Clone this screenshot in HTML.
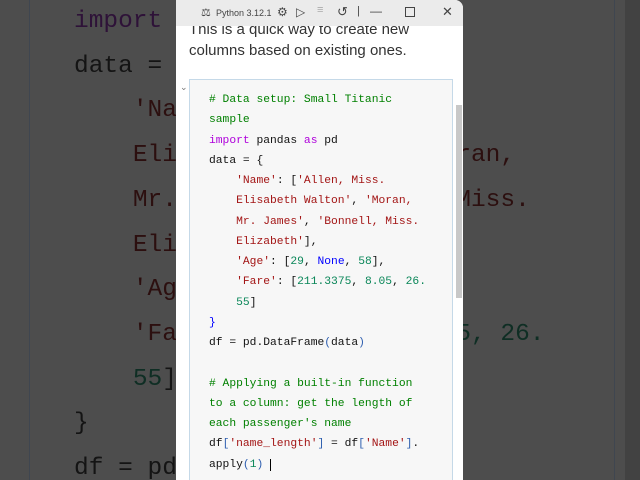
<!DOCTYPE html>
<html><head><meta charset="utf-8"><style>
html,body{margin:0;padding:0;width:640px;height:480px;overflow:hidden;background:#4d4d4d;position:relative}
.bg{position:absolute;left:74px;top:0;font:24.5px/44.7px "Liberation Mono",monospace;color:#141414;white-space:pre;margin:0}
.bg .r{color:#2c0f0f}.bg .k{color:#2e1238}.bg .n{color:#0f2e24}.bg .b{color:#141f44}
.vl{position:absolute;top:0;width:1px;height:480px;background:#3f4650}
.win{position:absolute;left:176px;top:0;width:287px;height:480px;background:#fff;border-radius:0 8px 0 0;overflow:hidden}
.tb{position:absolute;left:0;top:0;width:287px;height:26px;background:#ebebeb;font:9px "Liberation Sans",sans-serif;color:#444;z-index:2}
.tb span{position:absolute;top:8px}
.md{position:absolute;left:13px;top:19px;font:15px/21px "Liberation Sans",sans-serif;color:#333}
.cell{position:absolute;left:13px;top:79px;width:262px;height:410px;background:#f7f7f7;border:1px solid #c5d9e8}
.code{position:absolute;left:19px;top:10px;font:11.3px/20.25px "Liberation Mono",monospace;color:#111;white-space:pre;margin:0}
.c{color:#008000}.k{color:#af00db}.s{color:#a31515}.n{color:#098658}.b{color:#0000ff}.p{color:#3060b0}
.sb{position:absolute;left:280px;top:105px;width:6px;height:193px;background:#c8c8c8}
</style></head><body>
<div class="vl" style="left:29px"></div>
<div class="vl" style="left:614px"></div>
<div style="position:absolute;left:625px;top:0;width:15px;height:480px;background:#424242"></div>
<pre class="bg"><span class="r" style="color:#2e1238">import</span> pandas as pd
data = {
    <span class="r">'Name': ['Allen, Miss.</span>
    <span class="r">Elisabeth Walton', 'Moran,</span>
    <span class="r">Mr. James', 'Bonnell, Miss.</span>
    <span class="r">Elizabeth'],</span>
    <span class="r">'Age'</span>: [<span class="r" style="color:#0f2e24">29</span>, <span class="r" style="color:#141f44">None</span>, <span class="r" style="color:#0f2e24">58</span>],
    <span class="r">'Fare'</span>: [<span class="r" style="color:#0f2e24">211.3375, 8.05, 26.</span>
    <span class="r" style="color:#0f2e24">55</span>]
}
df = pd.DataFrame(data)</pre>
<div class="win">
 <div class="tb">
  <span style="left:25px;top:6px;font-size:11px">&#9878;</span>
  <span style="left:40px">Python 3.12.1</span>
  <span style="left:101px;top:5px;font-size:12px">&#9881;</span>
  <span style="left:120px;top:5px;font-size:12px">&#9655;</span>
  <span style="left:141px;top:4px;font-size:11px;color:#aaa">&#8801;</span>
  <span style="left:161px;top:4px;font-size:13px">&#8634;</span>
  <span style="left:181px;top:5px;font-size:11px">|</span>
  <span style="left:194px;top:4px;font-size:12px">&#8212;</span>
  <span style="left:229px;top:7px;width:8px;height:8px;border:1px solid #444"></span>
  <span style="left:266px;top:4px;font-size:13px">&#10005;</span>
 </div>
 <div class="md">This is a quick way to create new<br>columns based on existing ones.</div>
 <div style="position:absolute;left:4px;top:82px;font:9px sans-serif;color:#777">&#8964;</div>
 <div class="cell">
<pre class="code"><span class="c"># Data setup: Small Titanic
sample</span>
<span class="k">import</span> pandas <span class="k">as</span> pd
data = {
    <span class="s">'Name'</span>: [<span class="s">'Allen, Miss.
    Elisabeth Walton'</span>, <span class="s">'Moran,
    Mr. James'</span>, <span class="s">'Bonnell, Miss.
    Elizabeth'</span>],
    <span class="s">'Age'</span>: [<span class="n">29</span>, <span class="b">None</span>, <span class="n">58</span>],
    <span class="s">'Fare'</span>: [<span class="n">211.3375</span>, <span class="n">8.05</span>, <span class="n">26.
    55</span>]
<span class="b">}</span>
df = pd.DataFrame<span class="p">(</span>data<span class="p">)</span>

<span class="c"># Applying a built-in function
to a column: get the length of
each passenger's name</span>
df<span class="p">[</span><span class="s">'name_length'</span><span class="p">]</span> = df<span class="p">[</span><span class="s">'Name'</span><span class="p">]</span>.
apply<span class="p">(</span><span class="n">1</span><span class="p">)</span> <span style="border-left:1.5px solid #000"></span></pre>
 </div>
 <div class="sb"></div>
</div>
</body></html>
